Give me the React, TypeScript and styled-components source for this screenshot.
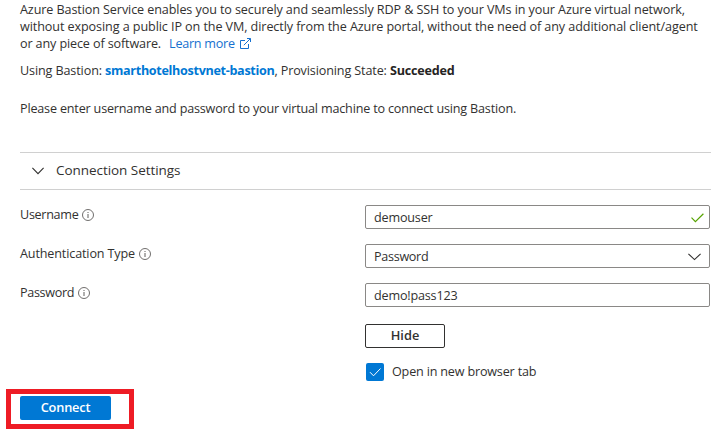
import React from "react";
import styled, { createGlobalStyle } from "styled-components";

const GlobalStyle = createGlobalStyle`
  *, *::before, *::after { box-sizing: border-box; }
  body {
    margin: 0;
    background: #fff;
    color: #323130;
    font-family: "Open Sans", "Noto Sans", sans-serif;
    font-size: 12.6px;
    line-height: 17px;
    overflow: hidden;
  }
  p { margin: 0; }
`;

const Page = styled.main`
  width: 711px;
  height: 437px;
  padding-left: 20px;
  padding-top: 1px;
  overflow: hidden;
`;

const Paragraph = styled.p<{ $gap: number }>`
  margin-bottom: ${(p) => p.$gap}px;
  white-space: nowrap;
`;

const Line = styled.span<{ $spacing?: number }>`
  display: block;
  height: 17px;
  letter-spacing: ${(p) => p.$spacing ?? -0.18}px;
`;

const Text = styled.span<{ $spacing?: number }>`
  letter-spacing: ${(p) => p.$spacing ?? -0.18}px;
`;

const Link = styled.a`
  color: #1570cf;
  margin-left: 8px;
  text-decoration: none;
  letter-spacing: -0.25px;
  svg { margin-left: 5px; vertical-align: -1px; }
`;

const Strong = styled.strong<{ $link?: boolean; $spacing: number }>`
  font-weight: 700;
  color: ${(p) => (p.$link ? "#0078d4" : "#252423")};
  letter-spacing: ${(p) => p.$spacing}px;
`;

const SectionHeader = styled.header`
  display: flex;
  align-items: center;
  width: 691px;
  height: 38px;
  padding: 0 0 1px 12px;
  gap: 12px;
  border-top: 1px solid #d0d0d0;
  border-bottom: 1px solid #d0d0d0;
  font-size: 13.5px;
`;

const Form = styled.form`
  display: flex;
  flex-direction: column;
  gap: 15px;
  padding-top: 15px;
`;

const Field = styled.div`
  display: grid;
  grid-template-columns: 345px 345px;
  height: 24px;
`;

const Label = styled.label`
  display: flex;
  align-items: center;
  height: 19px;
  gap: 4px;
  svg { margin-top: 1px; }
`;

const Control = styled.div<{ $pad: number }>`
  display: flex;
  align-items: center;
  justify-content: space-between;
  height: 24px;
  padding: 1px ${(p) => p.$pad}px 0 8px;
  border: 1px solid #8a8886;
  border-radius: 2px;
`;

const Extras = styled.div`
  display: flex;
  flex-direction: column;
  align-items: flex-start;
  margin-left: 345px;
  padding-top: 2px;
  gap: 15px;
`;

const HideButton = styled.button`
  width: 80px;
  height: 24px;
  padding: 0 0 2px;
  background: #fff;
  border: 1px solid #323130;
  border-radius: 2px;
  color: #323130;
  font: 600 12.8px/20px "Open Sans", sans-serif;
`;

const CheckRow = styled.label`
  display: flex;
  align-items: flex-start;
  height: 18px;
  margin-left: 1px;
  gap: 8px;
`;

const CheckBox = styled.span`
  display: flex;
  width: 18px;
  height: 18px;
  border-radius: 2px;
  background: #0078d4;
`;

const Highlight = styled.div`
  width: 128px;
  height: 40px;
  margin: 8px 0 0 -14px;
  padding: 2px 0 0 9px;
  border: 5px solid #ee1c25;
`;

const ConnectButton = styled.button`
  display: block;
  width: 91px;
  height: 24px;
  padding: 0 0 2px;
  border: 0;
  border-radius: 2px;
  background: #0078d4;
  color: #fff;
  font: 600 12.8px/22px "Open Sans", sans-serif;
  letter-spacing: -0.2px;
`;

const InfoIcon = () => (
  <svg width="12" height="12" viewBox="0 0 12 12" fill="none" stroke="#605e5c">
    <circle cx="6" cy="6" r="5.5" strokeWidth=".9" />
    <path d="M6 5v4M6 3v1" strokeWidth="1" />
  </svg>
);

const ExternalIcon = () => (
  <svg width="11" height="11" viewBox="0 0 11 11" fill="none" stroke="#1570cf" strokeWidth="1">
    <path d="M5 2.5H.5v8h8V6M3.8 7.2L10.3.7M7 .5h3.5V4" />
  </svg>
);

const Chevron = ({ color = "#323130", width = 12 }: { color?: string; width?: number }) => (
  <svg width={width} height="8" viewBox={`0 0 ${width} 8`} fill="none" stroke={color} strokeWidth="1.1">
    <path d={`M.4.8L${width / 2} 6.6L${width - 0.4}.8`} />
  </svg>
);

const ValidIcon = () => (
  <svg width="13" height="10" viewBox="0 0 13 10" fill="none" stroke="#57a300" strokeWidth="1.2">
    <path d="M.5 4.7L4.4 8.6L12.4.8" />
  </svg>
);

const TickIcon = () => (
  <svg width="18" height="18" viewBox="0 0 18 18" fill="none" stroke="#fff" strokeWidth="1">
    <path d="M4 9.2L7.5 12.8L14.5 5.5" />
  </svg>
);

export default function App() {
  return (
    <>
      <GlobalStyle />
      <Page>
        <Paragraph $gap={10}>
          <Line $spacing={-0.1}>Azure Bastion Service enables you to securely and seamlessly RDP &amp; SSH to your VMs in your Azure virtual network,</Line>
          <Line $spacing={-0.087}>without exposing a public IP on the VM, directly from the Azure portal, without the need of any additional client/agent</Line>
          <Line>
            <Text $spacing={-0.13}>or any piece of software.</Text>
            <Link>Learn more<ExternalIcon /></Link>
          </Line>
        </Paragraph>
        <Paragraph $gap={21}>
          <Line>
            <Text $spacing={-0.12}>Using Bastion: </Text>
            <Strong $link $spacing={-0.32}>smarthotelhostvnet-bastion</Strong>
            <Text $spacing={-0.13}>, Provisioning State: </Text>
            <Strong $spacing={-0.2}>Succeeded</Strong>
          </Line>
        </Paragraph>
        <Paragraph $gap={35}>
          <Line>Please enter username and password to your virtual machine to connect using Bastion.</Line>
        </Paragraph>
        <SectionHeader>
          <Chevron />
          <Text $spacing={-0.05}>Connection Settings</Text>
        </SectionHeader>
        <Form onSubmit={(e) => e.preventDefault()}>
          <Field>
            <Label><Text $spacing={-0.3}>Username</Text><InfoIcon /></Label>
            <Control $pad={5}><Text>demouser</Text><ValidIcon /></Control>
          </Field>
          <Field>
            <Label><Text $spacing={-0.14}>Authentication Type</Text><InfoIcon /></Label>
            <Control $pad={8}><Text $spacing={-0.3}>Password</Text><Chevron width={13} /></Control>
          </Field>
          <Field>
            <Label><Text $spacing={-0.32}>Password</Text><InfoIcon /></Label>
            <Control $pad={8}><Text>demo!pass123</Text></Control>
          </Field>
          <Extras>
            <HideButton type="button">Hide</HideButton>
            <CheckRow><CheckBox><TickIcon /></CheckBox><Text>Open in new browser tab</Text></CheckRow>
          </Extras>
        </Form>
        <Highlight><ConnectButton type="button">Connect</ConnectButton></Highlight>
      </Page>
    </>
  );
}
